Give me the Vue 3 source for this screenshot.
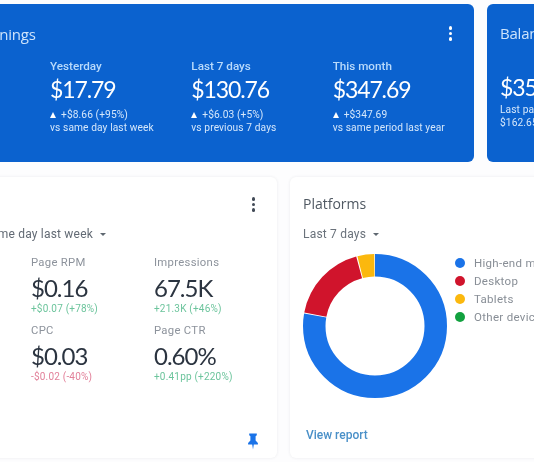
<script setup>
const stats = [
  { label: 'Yesterday', value: '$17.79', delta: '+$8.66 (+95%)', note: 'vs same day last week' },
  { label: 'Last 7 days', value: '$130.76', delta: '+$6.03 (+5%)', note: 'vs previous 7 days' },
  { label: 'This month', value: '$347.69', delta: '+$347.69', note: 'vs same period last year' }
]
const metrics = [
  { label: 'Page RPM', value: '$0.16', delta: '+$0.07 (+78%)', tone: 'up' },
  { label: 'Impressions', value: '67.5K', delta: '+21.3K (+46%)', tone: 'up' },
  { label: 'CPC', value: '$0.03', delta: '-$0.02 (-40%)', tone: 'down' },
  { label: 'Page CTR', value: '0.60%', delta: '+0.41pp (+220%)', tone: 'up' }
]
const slices = [
  { color: '#1a73e8', start: 0, size: 280 },
  { color: '#d0142c', start: 280.8, size: 64 },
  { color: '#fbb80e', start: 345.8, size: 13.6 }
]
const legend = [
  { color: '#1a73e8', label: 'High-end mobile devices' },
  { color: '#d0142c', label: 'Desktop' },
  { color: '#fbb80e', label: 'Tablets' },
  { color: '#12a13f', label: 'Other devices' }
]
</script>

<template>
  <div class="page">
    <div class="row top">
      <section class="blue earnings">
        <header class="blue-head">
          <h2>Earnings</h2>
          <span class="kebab light"><i></i><i></i><i></i></span>
        </header>
        <div class="stats">
          <div v-for="s in stats" :key="s.label" class="stat">
            <div class="stat-label">{{ s.label }}</div>
            <div class="stat-value">{{ s.value }}</div>
            <div class="stat-delta"><span class="tri"></span>{{ s.delta }}</div>
            <div class="stat-note">{{ s.note }}</div>
          </div>
        </div>
      </section>
      <section class="blue balance">
        <h2>Balance</h2>
        <div class="stat-value bal-value">$350.40</div>
        <div class="stat-note">Last payment</div>
        <div class="stat-note">$162.65</div>
      </section>
    </div>

    <div class="row bottom">
      <section class="card perf">
        <div class="perf-head"><span class="kebab dark"><i></i><i></i><i></i></span></div>
        <div class="filter perf-filter">vs same day last week <span class="caret"></span></div>
        <div class="metrics">
          <div v-for="m in metrics" :key="m.label" class="metric">
            <div class="m-label">{{ m.label }}</div>
            <div class="m-value">{{ m.value }}</div>
            <div class="m-delta" :class="m.tone">{{ m.delta }}</div>
          </div>
        </div>
        <div class="pin-row">
          <svg class="pin" width="12" height="17" viewBox="0 0 12 17">
            <path d="M2.2 0.5h7.6v1.8L8.6 3.2v4.2L10.9 10v1.4H6.8L6 16.5 5.2 11.4H1.1V10L3.4 7.4V3.2L2.2 2.3z" fill="#1a73e8" />
          </svg>
        </div>
      </section>

      <section class="card platforms">
        <h3>Platforms</h3>
        <div class="filter">Last 7 days <span class="caret"></span></div>
        <div class="chart-row">
          <svg class="donut" width="146" height="146" viewBox="0 0 146 146">
            <circle
              v-for="s in slices"
              :key="s.color"
              cx="73" cy="73" r="60.75"
              fill="none"
              :stroke="s.color"
              stroke-width="22.5"
              pathLength="360"
              :stroke-dasharray="`${s.size} ${360 - s.size}`"
              :stroke-dashoffset="-s.start"
              transform="rotate(-90 73 73)"
            />
          </svg>
          <ul class="legend">
            <li v-for="l in legend" :key="l.label">
              <span class="dot" :style="{ background: l.color }"></span>{{ l.label }}
            </li>
          </ul>
        </div>
        <a class="link">View report</a>
      </section>
    </div>
  </div>
</template>

<style scoped>
.page {
  width: 534px;
  height: 462px;
  overflow: hidden;
  background: #fdfdfe;
  font-family: Roboto, "Liberation Sans", sans-serif;
  filter: blur(0.45px);
}
.row {
  display: flex;
  gap: 13px;
  margin-left: -40px;
  width: 900px;
}
.top {
  padding-top: 4px;
}
.blue {
  background: #0b62cf;
  border-radius: 6px;
  color: #fff;
  height: 158px;
  box-sizing: border-box;
  flex: none;
}
.earnings {
  width: 514px;
}
.blue-head {
  display: flex;
  justify-content: space-between;
  align-items: center;
  padding: 20px 22px 0 17px;
  height: 19px;
}
h2 {
  margin: 0;
  font-size: 15px;
  font-weight: 400;
  color: #cfe4fb;
  font-family: "Open Sans", Roboto, sans-serif;
  letter-spacing: -0.2px;
}
.kebab {
  display: flex;
  flex-direction: column;
  gap: 2px;
}
.kebab i {
  width: 3.5px;
  height: 3.5px;
  border-radius: 50%;
}
.light i {
  background: #fff;
}
.dark i {
  background: #414a56;
}
.stats {
  display: flex;
  padding: 15px 0 0 90px;
}
.stat {
  width: 141.5px;
}
.stat-label {
  font-size: 11.7px;
  line-height: 16px;
  color: #b9dafb;
  font-weight: 500;
}
.stat-value {
  font-family: Lato, Roboto, sans-serif;
  font-size: 23px;
  line-height: 32px;
  margin-top: -1px;
  letter-spacing: -1.1px;
}
.stat-delta,
.stat-note {
  font-size: 10.2px;
  line-height: 13px;
  letter-spacing: 0.1px;
  color: #d5e7fb;
  white-space: nowrap;
}
.stat-delta {
  margin-top: 3px;
}
.tri {
  display: inline-block;
  width: 0;
  height: 0;
  border-left: 3.5px solid transparent;
  border-right: 3.5px solid transparent;
  border-bottom: 6px solid #fff;
  margin-right: 5px;
}
.balance {
  width: 200px;
  padding: 19px 0 0 13px;
}
.bal-value {
  margin: 28px 0 0;
}
.bottom {
  margin-top: 15px;
}
.card {
  background: #fff;
  border-radius: 6px;
  height: 281px;
  box-sizing: border-box;
  flex: none;
  box-shadow: 0 0 3px rgba(60, 70, 90, 0.1);
}
.perf {
  width: 317px;
  padding: 20px 0 0;
}
.perf-head {
  display: flex;
  justify-content: flex-end;
  padding-right: 22px;
  height: 16px;
}
.filter {
  font-size: 12px;
  line-height: 16px;
  letter-spacing: 0.2px;
  color: #626a74;
  font-weight: 400;
}
.perf-filter {
  margin: 13px 0 0 0;
  padding-left: 9px;
}
.caret {
  display: inline-block;
  width: 0;
  height: 0;
  border-left: 3.5px solid transparent;
  border-right: 3.5px solid transparent;
  border-top: 3.5px solid #5f6871;
  margin-left: 4px;
  vertical-align: 2px;
}
.metrics {
  display: grid;
  grid-template-columns: 123px 123px;
  padding: 14px 0 0 71px;
  row-gap: 9px;
}
.m-label {
  font-size: 11.3px;
  line-height: 14px;
  letter-spacing: 0.3px;
  color: #8d939c;
}
.m-value {
  font-family: Lato, Roboto, sans-serif;
  font-size: 24px;
  line-height: 32px;
  margin-top: 2px;
  color: #2b3440;
  letter-spacing: -1px;
}
.m-delta {
  font-size: 10px;
  line-height: 12px;
  letter-spacing: 0.2px;
  margin-top: -1px;
}
.up {
  color: #6cc49c;
}
.down {
  color: #e2819a;
}
.pin-row {
  display: flex;
  justify-content: flex-end;
  padding: 50px 18px 0 0;
}
.platforms {
  width: 300px;
  padding: 19px 0 0 13px;
}
h3 {
  margin: 0;
  font-family: "Open Sans", Roboto, sans-serif;
  font-size: 14px;
  line-height: 16px;
  font-weight: 400;
  color: #4f5862;
}
.platforms .filter {
  margin-top: 14px;
  color: #6a727b;
}
.chart-row {
  display: flex;
  margin-top: 11px;
  margin-left: -1px;
}
.donut {
  flex: none;
}
.legend {
  list-style: none;
  margin: 0;
  padding: 1px 0 0 7px;
}
.legend li {
  display: flex;
  align-items: center;
  height: 18px;
  font-size: 11.5px;
  color: #888e96;
  white-space: nowrap;
  letter-spacing: 0.3px;
}
.dot {
  width: 10px;
  height: 10px;
  border-radius: 50%;
  margin-right: 9px;
  flex: none;
}
.link {
  display: block;
  margin: 29px 0 0 3px;
  font-size: 12px;
  line-height: 14px;
  font-weight: 500;
  color: #4a90c8;
}
</style>
